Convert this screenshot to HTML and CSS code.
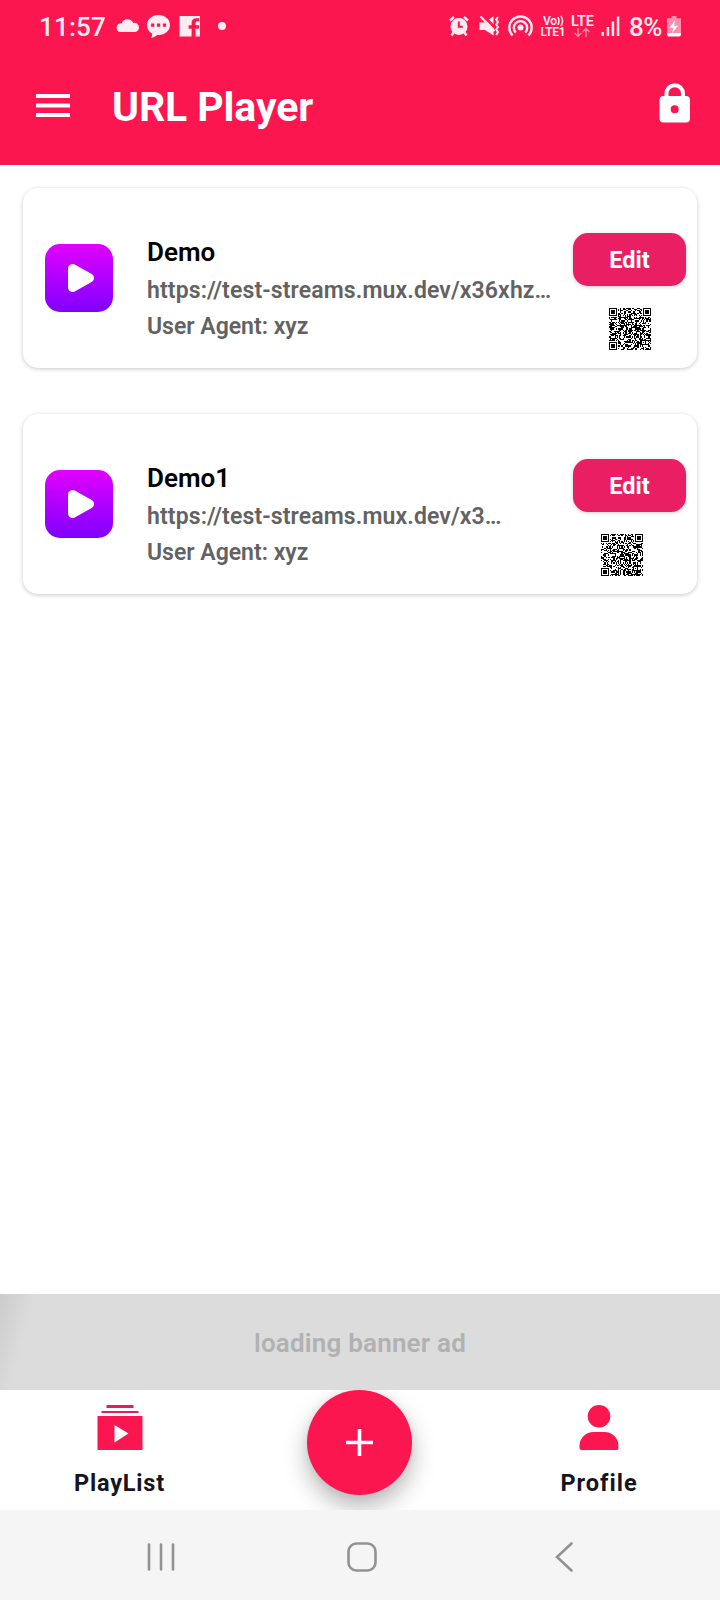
FILE: index.html
```html
<!DOCTYPE html>
<html lang="en">
<head>
<meta charset="utf-8">
<title>URL Player</title>
<link rel="stylesheet" href="styles.css">
</head>
<body>
<div class="screen">
  <header class="header">
    <div class="status">
      <span class="time">11:57</span>
      <svg class="notices" width="112" height="54" viewBox="115 0 112 54" fill="#ffebf0">
        <path d="M120.500 32a4.300 4.300 0 0 1-.4-8.500 4.800 4.800 0 0 1 1.500-.3 6.300 6.300 0 0 1 11.600-.2 4.500 4.500 0 0 1 5.800 4.500 4.500 4.500 0 0 1-4.500 4.500z"/>
        <path fill-rule="evenodd" d="M158.500 15c6.600 0 11.500 4.400 11.500 10s-4.900 10-11.500 10h-1.300c-1.700 1.500-4 2.700-6.200 3 1-1.300 1.300-3 .9-4.400-3-1.900-4.900-5-4.900-8.600 0-5.600 4.900-10 11.500-10zm-7.400 8.600v3.200h3.200v-3.200zm5.900 0v3.200h3.200v-3.200zm5.900 0v3.200h3.200v-3.200z"/>
        <path d="M179.500 16h20.500v20.500h-4.500v-7.800h3.200l.6-3.500h-3.800v-2c0-1.400.8-2 2.100-2h1.600v-3h-2.700c-3.200 0-4.900 1.700-4.900 4.600v2.400h-3v3.500h3v7.800h-12.100z"/>
        <circle cx="222" cy="26" r="4"/>
      </svg>
      <svg class="indicators" width="184" height="54" viewBox="446 0 184 54" fill="#ffebf0">
        <path fill-rule="evenodd" d="M459 18a8.500 8.500 0 1 1 0 17 8.500 8.500 0 0 1 0-17zm-1.200 3.500v6.200h5v-2h-3v-4.200z"/>
        <path d="M450 20.500l4-3.500M468 20.500l-4-3.500M453.500 32.500l-2 3M464.500 32.500l2 3" stroke="#ffebf0" stroke-width="2.400"/>
        <path d="M479.500 22.500h5.500l8.500-6.500v19.500L485 30h-5.500z"/>
        <path d="M483.500 16l13 13" stroke="#fb164f" stroke-width="2.600"/>
        <path d="M480.500 16.500l14 14.500" stroke="#ffebf0" stroke-width="2.200"/>
        <path d="M498 17l-1.800 2.500 1.800 2.500-1.800 2.500 1.800 2.500-1.800 2.500 1.800 2.500-1.800 3" fill="none" stroke="#ffebf0" stroke-width="2"/>
        <g fill="none" stroke="#ffebf0" stroke-width="2.400">
          <path d="M512.500 35.500a11.200 11.200 0 1 1 16 0"/>
          <path d="M515.800 32.600a6.700 6.700 0 1 1 9.400 0"/>
        </g>
        <circle cx="520.500" cy="27.500" r="3"/>
        <text class="tiny" x="543" y="25" textLength="14">Vo</text>
        <path d="M558 17q2 4 0 8M561 16q3 5 0 10" fill="none" stroke="#ffebf0" stroke-width="1.500"/>
        <text class="tiny" x="540.500" y="36" textLength="25">LTE1</text>
        <text class="tiny lte" x="571" y="26" textLength="23">LTE</text>
        <path d="M578 28v8.500M574.500 33l3.500 3.500 3.500-3.500M586 37v-8.500M582.500 32l3.500-3.500 3.500 3.500" fill="none" stroke="#fd839f" stroke-width="1.500"/>
        <path d="M601.500 32h2.500v4h-2.500zM606.700 27h2.500v9h-2.500zM611.700 21.500h2.500v14.500h-2.500zM616.800 16.500h2.500v19.500h-2.500z"/>
      </svg>
      <span class="percent">8%</span>
      <svg class="battery" width="16" height="54" viewBox="666 0 16 54">
        <path d="M671.500 16h5v2.200h4.500v15h-14v-15h4.500z" fill="#fd8fab"/>
        <path d="M667 33h14v1.500a2 2 0 0 1-2 2h-10a2 2 0 0 1-2-2zM675 20.500l-5.500 7.200h4l-1.400 5.300 6-7.300h-4z" fill="#fff"/>
      </svg>
    </div>
    <div class="toolbar">
      <svg width="34" height="24" viewBox="0 0 34 24" fill="#fff"><path d="M0 0h34v4H0zM0 9.500h34v4H0zM0 19h34v4H0z"/></svg>
      <h1 class="title">URL Player</h1>
      <svg class="lock" width="32" height="40" viewBox="0 0 32 40">
        <path d="M7.500 16V10.500a8 8 0 0 1 16.500 0V16" fill="none" stroke="#fff" stroke-width="4"/>
        <path fill-rule="evenodd" fill="#fff" d="M4.500 13h22.500a4 4 0 0 1 4 4v18.500a4 4 0 0 1-4 4h-22.500a4 4 0 0 1-4-4v-18.500a4 4 0 0 1 4-4zM15.700 22.200a4 4 0 1 0 0 8 4 4 0 0 0 0-8z"/>
      </svg>
    </div>
  </header>

  <main class="list">
    <article class="card">
      <svg class="thumb" width="68" height="68" viewBox="0 0 68 68">
        <defs><linearGradient id="violet" x2="0" y2="1"><stop offset="0" stop-color="#e100ff"/><stop offset="1" stop-color="#7f00ff"/></linearGradient></defs>
        <rect width="68" height="68" rx="15" fill="url(#violet)"/>
        <path d="M27.500 24.500v19L44.500 34z" fill="#fff" stroke="#fff" stroke-width="9" stroke-linejoin="round"/>
      </svg>
      <div class="info">
        <h2 class="name">Demo</h2>
        <p class="line url">https://test-streams.mux.dev/x36xhz…</p>
        <p class="line">User Agent: xyz</p>
      </div>
      <div class="actions">
        <button class="edit">Edit</button>
        <svg class="qr" width="42" height="42" viewBox="0 0 37 37" data-seed="17"></svg>
      </div>
    </article>
    <article class="card">
      <svg class="thumb" width="68" height="68" viewBox="0 0 68 68">
        <rect width="68" height="68" rx="15" fill="url(#violet)"/>
        <path d="M27.500 24.500v19L44.500 34z" fill="#fff" stroke="#fff" stroke-width="9" stroke-linejoin="round"/>
      </svg>
      <div class="info">
        <h2 class="name">Demo1</h2>
        <p class="line url">https://test-streams.mux.dev/x3…</p>
        <p class="line">User Agent: xyz</p>
      </div>
      <div class="actions">
        <button class="edit">Edit</button>
        <svg class="qr shifted" width="42" height="42" viewBox="0 0 37 37" data-seed="71"></svg>
      </div>
    </article>
  </main>

  <div class="banner">loading banner ad</div>

  <nav class="tabs">
    <a class="tab">
      <svg width="46" height="46" viewBox="0 0 46 46" fill="#fb164f"><path d="M9.500 0h27v3h-27zM4.500 6h37v2h-37z" fill="#e31f57"/><path fill-rule="evenodd" d="M1 11h44a.5.5 0 0 1 .5.5V45H.5V11.500a.5.500 0 0 1 .5-.5zm16.500 9v17.500L31.500 28.500z"/></svg>
      <span class="tab-label">PlayList</span>
    </a>
    <button class="fab" aria-label="Add"><svg width="27" height="27" viewBox="0 0 27 27"><path d="M13.500 0v27M0 13.500h27" stroke="#fff" stroke-width="3.600"/></svg></button>
    <a class="tab">
      <svg width="40" height="46" viewBox="0 0 40 46" fill="#fb164f"><circle cx="20" cy="11.300" r="11.300"/><path d="M14.500 27h11A14 14 0 0 1 39.500 41v2a2 2 0 0 1-2 2h-35a2 2 0 0 1-2-2v-2a14 14 0 0 1 14-14z"/></svg>
      <span class="tab-label profile">Profile</span>
    </a>
  </nav>

  <footer class="system">
    <svg width="28" height="30" viewBox="0 0 28 30"><path d="M2 2.500v25M14 2.500v25M26 2.500v25"/></svg>
    <svg width="30" height="30" viewBox="0 0 30 30"><rect x="1.500" y="1.500" width="27" height="27" rx="8"/></svg>
    <svg width="18" height="30" viewBox="0 0 18 30"><path d="M16.500 1.500L2 15l14.500 13.500"/></svg>
  </footer>
</div>
<script src="qr.js"></script>
</body>
</html>
```

FILE: styles.css
```css
* { box-sizing: border-box; }
body, h1, h2, p { margin: 0; }
body { background: #fff; font-family: Roboto, "Noto Sans", sans-serif; }
svg { display: block; flex: none; }
button { border: 0; padding: 0; font: inherit; }

.screen { width: 720px; height: 1600px; display: flex; flex-direction: column; overflow: hidden; }
.header { height: 165px; background: #fb164f; border-bottom: 1px solid #dc1f55; color: #fff; }
.status { height: 54px; display: flex; padding: 0 38px 0 39px; color: #ffebf0; font-size: 26px; line-height: 54px; font-weight: 500; white-space: nowrap; }
.time { width: 76px; letter-spacing: .2px; }
.indicators { margin-left: auto; }
.percent { width: 36px; margin-left: -1px; margin-right: 1px; letter-spacing: -.5px; }
.tiny { font-size: 12px; font-weight: 600; line-height: 12px; }
.lte { font-size: 14.5px; }
.toolbar { height: 103px; display: flex; align-items: center; padding: 0 29px 0 36px; }
.title { margin: 2px 0 0 42px; font-size: 41px; line-height: 48px; font-weight: 700; letter-spacing: -.1px; }
.toolbar > .lock { margin-left: auto; margin-top: -6px; }

.list { flex: 1; padding: 23px 23px 0; display: flex; flex-direction: column; gap: 46px; }
.card { height: 180px; display: flex; padding: 45px 11px 0 22px; border-radius: 15px; background: #fff; box-shadow: 0 1px 4px rgba(0,0,0,.22); }
.thumb { margin-top: 11px; }
.info { margin: 1px 0 0 34px; flex: 1; white-space: nowrap; }
.name { margin-bottom: 2px; font-size: 26px; line-height: 37px; font-weight: 600; color: #000; }
.line { font-size: 23px; line-height: 36px; font-weight: 600; color: #626262; }
.url { letter-spacing: .12px; }
.actions { width: 113px; display: flex; flex-direction: column; align-items: center; gap: 22px; }
.edit { width: 113px; height: 53px; border-radius: 15px; background: #e91e63; color: #fff; font-size: 23.5px; font-weight: 700; box-shadow: 0 1px 4px rgba(0,0,0,.2); }
.qr { shape-rendering: crispEdges; }
.shifted { margin-right: 16px; }

.banner { height: 96px; background: linear-gradient(105deg, #cbcbcb 0, #dcdcdc 34px); color: #b1b1b1; font-size: 26px; line-height: 98px; font-weight: 600; letter-spacing: .2px; text-align: center; }
.tabs { height: 120px; display: grid; grid-template-columns: 239px 241px 238px; justify-items: center; overflow: hidden; background: #fff; }
.tab { padding-top: 15px; display: flex; flex-direction: column; align-items: center; gap: 18px; }
.tab-label { color: #151521; font-size: 23.5px; line-height: 28px; font-weight: 700; letter-spacing: .8px; }
.profile { letter-spacing: 1px; }
.fab { width: 105px; height: 105px; border-radius: 50%; background: #fb164f; display: grid; place-items: center; box-shadow: 0 12px 24px rgba(0,0,0,.28), 0 0 8px rgba(0,0,0,.08); }
.system { height: 90px; display: grid; grid-template-columns: 200px 208px 1fr; align-items: center; padding: 3px 0 0 147px; background: #f5f5f5; fill: none; stroke: #929292; stroke-width: 2.600; stroke-linecap: round; }
```

FILE: qr.js
```js
// Fills each .qr element with a 37-module code pattern.
document.querySelectorAll('.qr').forEach(function (svg) {
  var seed = Number(svg.dataset.seed), d = '', n = 37;
  function finder(x, y, ox, oy) {
    var dx = x - ox, dy = y - oy;
    if (dx < -1 || dy < -1 || dx > 7 || dy > 7) return null;
    var r = Math.max(Math.abs(dx - 3), Math.abs(dy - 3));
    return r === 3 || r < 2;
  }
  for (var y = 0; y < n; y++) {
    for (var x = 0; x < n; x++) {
      seed = (seed * 1103515245 + 12345) % 2147483648;
      var on = finder(x, y, 0, 0);
      if (on === null) on = finder(x, y, 30, 0);
      if (on === null) on = finder(x, y, 0, 30);
      if (on === null && (x === 6 || y === 6)) on = (x + y) % 2 === 0;
      if (on === null && Math.max(Math.abs(x - 30), Math.abs(y - 30)) < 3) on = Math.max(Math.abs(x - 30), Math.abs(y - 30)) !== 1;
      if (on === null) on = (seed >> 16) % 2 === 0;
      if (on) d += 'M' + x + ' ' + y + 'h1v1h-1z';
    }
  }
  var path = document.createElementNS('http://www.w3.org/2000/svg', 'path');
  path.setAttribute('d', d);
  svg.appendChild(path);
});
```
